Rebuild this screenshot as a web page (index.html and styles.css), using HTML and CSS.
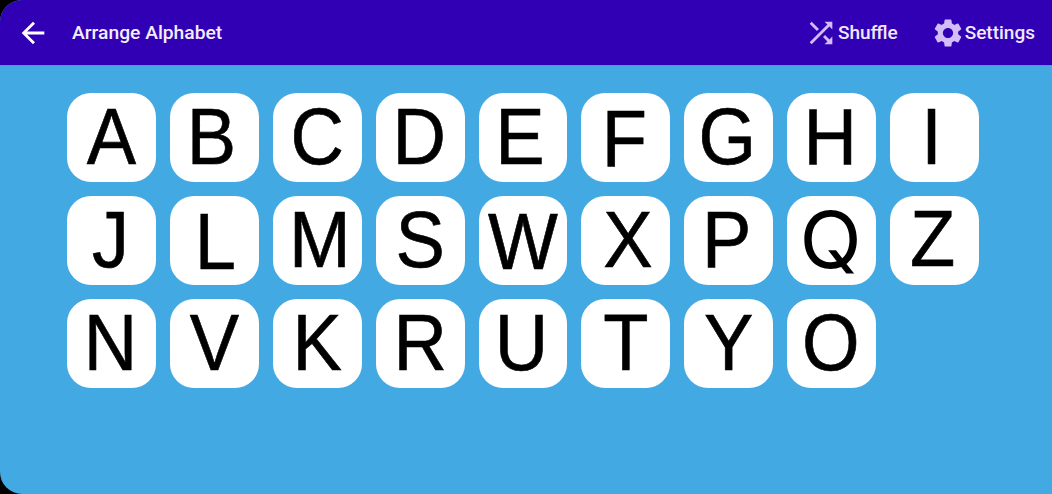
FILE: index.html
```html
<!DOCTYPE html>
<html lang="en">
<head>
<meta charset="utf-8">
<title>Arrange Alphabet</title>
<link rel="stylesheet" href="styles.css">
</head>
<body>
<div class="app">
  <header class="bar">
    <button class="back" aria-label="Back">
      <svg viewBox="0 0 24 24" width="34" height="34"><path class="white" d="M20 11H7.83l5.59-5.59L12 4l-8 8 8 8 1.41-1.41L7.83 13H20z"/></svg>
    </button>
    <h1 class="title">Arrange Alphabet</h1>
    <div class="actions">
      <button class="action shuffle">
        <svg viewBox="0 0 24 24" width="34" height="34"><path class="lilac" d="M10.59 9.17 5.41 4 4 5.41l5.17 5.17zM14.5 4l2.04 2.04L4 18.59 5.41 20 17.96 7.46 20 9.5V4zm.33 9.41-1.41 1.41 3.13 3.13L14.5 20H20v-5.5l-2.04 2.04z"/></svg>
        <span>Shuffle</span>
      </button>
      <button class="action settings">
        <svg viewBox="0 0 24 24" width="34" height="34"><path class="lilac" d="M19.14 12.94c.04-.3.06-.61.06-.94 0-.32-.02-.64-.07-.94l2.03-1.58c.18-.14.23-.41.12-.61l-1.92-3.32c-.12-.22-.37-.29-.59-.22l-2.39.96c-.5-.38-1.03-.7-1.62-.94l-.36-2.54c-.04-.24-.24-.41-.48-.41h-3.84c-.24 0-.43.17-.47.41l-.36 2.54c-.59.24-1.13.57-1.62.94l-2.39-.96c-.22-.08-.47 0-.59.22L2.74 8.87c-.12.21-.08.47.12.61l2.03 1.58c-.05.3-.09.63-.09.94s.02.64.07.94l-2.03 1.58c-.18.14-.23.41-.12.61l1.92 3.32c.12.22.37.29.59.22l2.39-.96c.5.38 1.03.7 1.62.94l.36 2.54c.05.24.24.41.48.41h3.84c.24 0 .44-.17.47-.41l.36-2.54c.59-.24 1.13-.56 1.62-.94l2.39.96c.22.08.47 0 .59-.22l1.92-3.32c.12-.22.07-.47-.12-.61l-2.01-1.58zM12 15.6c-1.98 0-3.6-1.62-3.6-3.6s1.62-3.6 3.6-3.6 3.6 1.62 3.6 3.6-1.62 3.6-3.6 3.6z"/></svg>
        <span>Settings</span>
      </button>
    </div>
  </header>
  <main class="board">
    <div class="tile"><span class="ch">A</span></div>
    <div class="tile"><span class="ch nudge-b">B</span></div>
    <div class="tile"><span class="ch">C</span></div>
    <div class="tile"><span class="ch nudge-d">D</span></div>
    <div class="tile"><span class="ch nudge-e">E</span></div>
    <div class="tile"><span class="ch nudge-f">F</span></div>
    <div class="tile"><span class="ch nudge-g">G</span></div>
    <div class="tile"><span class="ch nudge-h">H</span></div>
    <div class="tile"><span class="ch nudge-i">I</span></div>
    <div class="tile"><span class="ch nudge-j">J</span></div>
    <div class="tile"><span class="ch nudge-l">L</span></div>
    <div class="tile"><span class="ch nudge-m">M</span></div>
    <div class="tile"><span class="ch">S</span></div>
    <div class="tile"><span class="ch nudge-w">W</span></div>
    <div class="tile"><span class="ch nudge-x">X</span></div>
    <div class="tile"><span class="ch nudge-p">P</span></div>
    <div class="tile"><span class="ch glyph-q">Q</span></div>
    <div class="tile"><span class="ch nudge-z">Z</span></div>
    <div class="tile"><span class="ch nudge-n">N</span></div>
    <div class="tile"><span class="ch">V</span></div>
    <div class="tile"><span class="ch">K</span></div>
    <div class="tile"><span class="ch">R</span></div>
    <div class="tile"><span class="ch nudge-u">U</span></div>
    <div class="tile"><span class="ch">T</span></div>
    <div class="tile"><span class="ch">Y</span></div>
    <div class="tile"><span class="ch nudge-o">O</span></div>
  </main>
</div>
</body>
</html>
```

FILE: styles.css
```css
html, body {
  margin: 0;
  height: 100%;
  background: #000;
}
.app {
  width: 1052px;
  height: 494px;
  overflow: hidden;
  display: flex;
  flex-direction: column;
  background: #42a9e3;
  border-radius: 22px 0 0 22px;
  font-family: Roboto, sans-serif;
}
.bar {
  height: 65px;
  flex: none;
  display: flex;
  align-items: center;
  background: #3200b4;
  border-bottom: 1px solid #5b8fe6;
  padding: 0 17px 0 16px;
}
button {
  background: none;
  border: 0;
  padding: 0;
  margin: 0;
  font: inherit;
  color: inherit;
  display: flex;
  align-items: center;
}
.white { fill: #fff; }
.lilac { fill: #d3bcf8; }
.title {
  margin: 0 0 0 22px;
  font-size: 19.25px;
  font-weight: 500;
  color: #f3eefc;
}
.actions {
  margin-left: auto;
  display: flex;
  align-items: center;
  gap: 33px;
}
.action {
  color: #f0e8fd;
  font-size: 19px;
  font-weight: 500;
}
.board {
  flex: 1;
  display: grid;
  grid-template-columns: repeat(9, 88.9px);
  grid-auto-rows: 89px;
  gap: 14px;
  align-content: start;
  padding: 27px 0 0 67px;
}
.tile {
  background: #fff;
  border-radius: 24px;
  display: flex;
  align-items: center;
  justify-content: center;
}
.ch {
  --dx: 0px;
  --dy: -1px;
  --sx: 1;
  display: block;
  color: #000;
  font-family: "Liberation Sans", Arial, sans-serif;
  font-size: 74px;
  line-height: 89px;
  -webkit-text-stroke: 0.6px #000;
  transform: translate(var(--dx), var(--dy)) scale(var(--sx), 1.08);
}
/* The original tiles are bitmaps whose glyphs are not quite centred. */
.nudge-b { --dx: -3px; }
.nudge-d { --dx: -1px; }
.nudge-e { --dx: -3px; }
.nudge-f { --dx: -1.5px; --dy: 1px; }
.nudge-g { --dx: -1.5px; }
.nudge-h { --dx: -1.5px; }
.nudge-i { --dx: -3px; }
.nudge-j { --dx: -1px; }
.nudge-l { --dx: 1px; --dy: 1px; }
.nudge-m { --dx: 2.5px; }
.nudge-w { --dy: 1px; }
.nudge-x { --dx: 2px; }
.nudge-p { --dx: -2px; }
.nudge-z { --dx: -2px; --dy: -2px; }
.nudge-n { --dx: -1px; }
.nudge-u { --dx: -1.5px; }
.nudge-o { --dx: -1px; }
/* Liberation's Q has a long descending tail; Inter's crosses the bowl as in the original. */
.glyph-q {
  font-family: Inter, sans-serif;
  font-size: 72px;
  -webkit-text-stroke: 0;
  --dx: -1px;
  --dy: -1px;
  --sx: 1.13;
}
```
